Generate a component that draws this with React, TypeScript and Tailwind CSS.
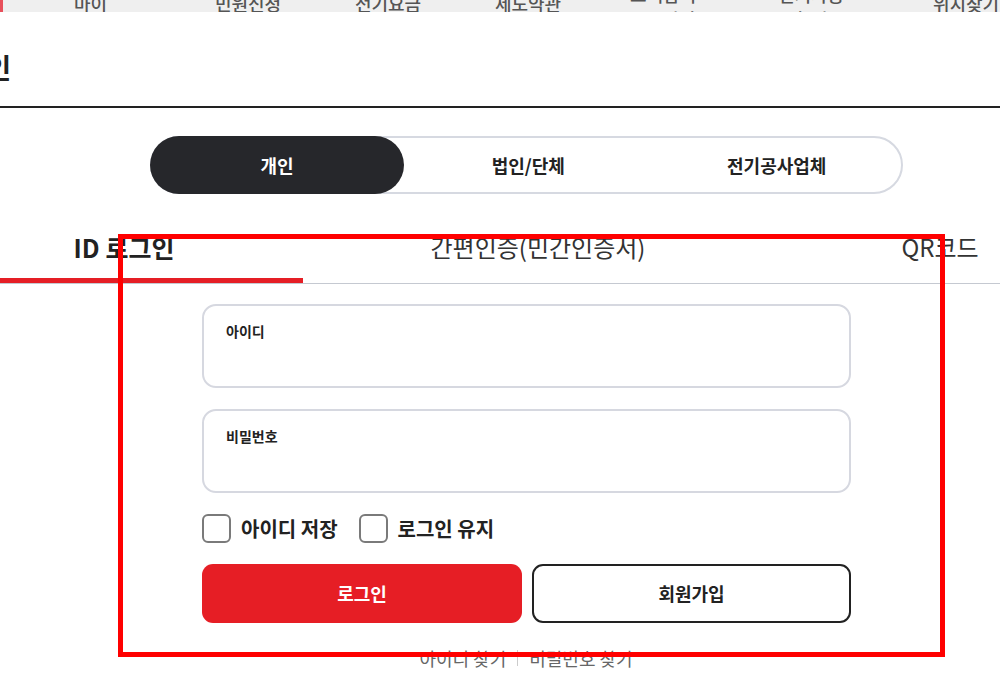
const NAV = [
  { w: 'w-[175px]', lines: ['마이'] },
  { w: 'w-[140px]', lines: ['민원신청'] },
  { w: 'w-[140px]', lines: ['전기요금'] },
  { w: 'w-[140px]', lines: ['제도약관'] },
  { w: 'w-[130px]', lines: ['고객참여', '소통마당'] },
  { w: 'w-[166px]', lines: ['전기사용', '통합정보'] },
  { w: 'w-[144px]', lines: ['위치찾기'] },
];

export default function App() {
  return (
    <div className="relative w-[1000px] h-[679px] overflow-hidden bg-white text-[#222] font-['Noto_Sans_CJK_KR',sans-serif]">
      {/* top nav, mostly scrolled away */}
      <div className="h-[12px] bg-[#efefef] overflow-hidden flex border-l-[3px] border-[#e8505b]">
        {NAV.map((n) => (
          <div
            key={n.lines[0]}
            className={`${n.w} shrink-0 text-center text-[18px] text-[#555] font-medium whitespace-nowrap ${
              n.lines.length > 1 ? '-mt-[18px] leading-[25px]' : '-mt-[8px] leading-[22px]'
            }`}
          >
            {n.lines.map((l) => (
              <div key={l}>{l}</div>
            ))}
          </div>
        ))}
      </div>

      {/* page title */}
      <div className="h-[96px] border-b-2 border-[#222] pt-[36px]">
        <h1 className="-ml-[66px] text-[28px] font-bold leading-[38px] whitespace-nowrap">로그인</h1>
      </div>

      {/* member type switch */}
      <div className="mt-[28px] ml-[150px] w-[753px] h-[58px] rounded-full border-2 border-[#d6d9e1] flex items-center">
        <button className="-ml-[2px] w-[254px] h-[58px] rounded-full bg-[#26272b] text-white text-[18px] font-bold">
          개인
        </button>
        <button className="flex-1 h-full text-[18px] font-bold">법인/단체</button>
        <button className="flex-1 h-full text-[18px] font-bold">전기공사업체</button>
      </div>

      {/* login method tabs */}
      <div className="flex border-b border-[#c5c9d1] whitespace-nowrap">
        <div className="-ml-[55px] w-[358px] shrink-0 h-[89px] pt-[38px] text-center text-[25px] leading-[30px] font-bold border-b-[5px] border-[#e51e25]">
          ID 로그인
        </div>
        <div className="w-[470px] shrink-0 h-[89px] pt-[38px] text-center text-[24px] leading-[30px] text-[#333]">
          간편인증(민간인증서)
        </div>
        <div className="w-[334px] shrink-0 h-[89px] pt-[38px] text-center text-[24px] leading-[30px] text-[#333]">
          QR코드
        </div>
      </div>

      {/* form */}
      <div className="ml-[202px] w-[649px] pt-[20px] flex flex-col">
        <label className="h-[84px] rounded-[14px] border-2 border-[#d6d8e0] pl-[22px] pt-[16px]">
          <span className="block text-[14px] font-bold leading-[18px]">아이디</span>
        </label>
        <label className="mt-[21px] h-[84px] rounded-[14px] border-2 border-[#d6d8e0] pl-[22px] pt-[16px]">
          <span className="block text-[14px] font-bold leading-[18px]">비밀번호</span>
        </label>

        <div className="mt-[21px] flex items-center">
          <span className="w-[29px] h-[29px] rounded-[6px] border-2 border-[#7a7a7a]" />
          <span className="ml-[10px] text-[20px] font-bold leading-[29px]">아이디 저장</span>
          <span className="ml-[21px] w-[29px] h-[29px] rounded-[6px] border-2 border-[#7a7a7a]" />
          <span className="ml-[10px] text-[20px] font-bold leading-[29px]">로그인 유지</span>
        </div>

        <div className="mt-[21px] flex gap-[10px]">
          <button className="w-[320px] h-[59px] rounded-[11px] bg-[#e61e25] text-white text-[18px] font-bold">
            로그인
          </button>
          <button className="w-[319px] h-[59px] rounded-[11px] border-2 border-[#222] text-[18px] font-bold">
            회원가입
          </button>
        </div>
      </div>

      <div className="mt-[23px] flex items-center justify-center gap-[11px] ml-[26px] w-[1000px] text-[18px] leading-[24px] text-[#666]">
        <span>아이디 찾기</span>
        <span className="w-px h-[16px] bg-[#ccc]" />
        <span>비밀번호 찾기</span>
      </div>

      {/* annotation frame drawn over the screenshot */}
      <div className="absolute left-[118px] top-[234px] w-[827px] h-[423px] border-[5px] border-[#ff0000] pointer-events-none" />
    </div>
  );
}
